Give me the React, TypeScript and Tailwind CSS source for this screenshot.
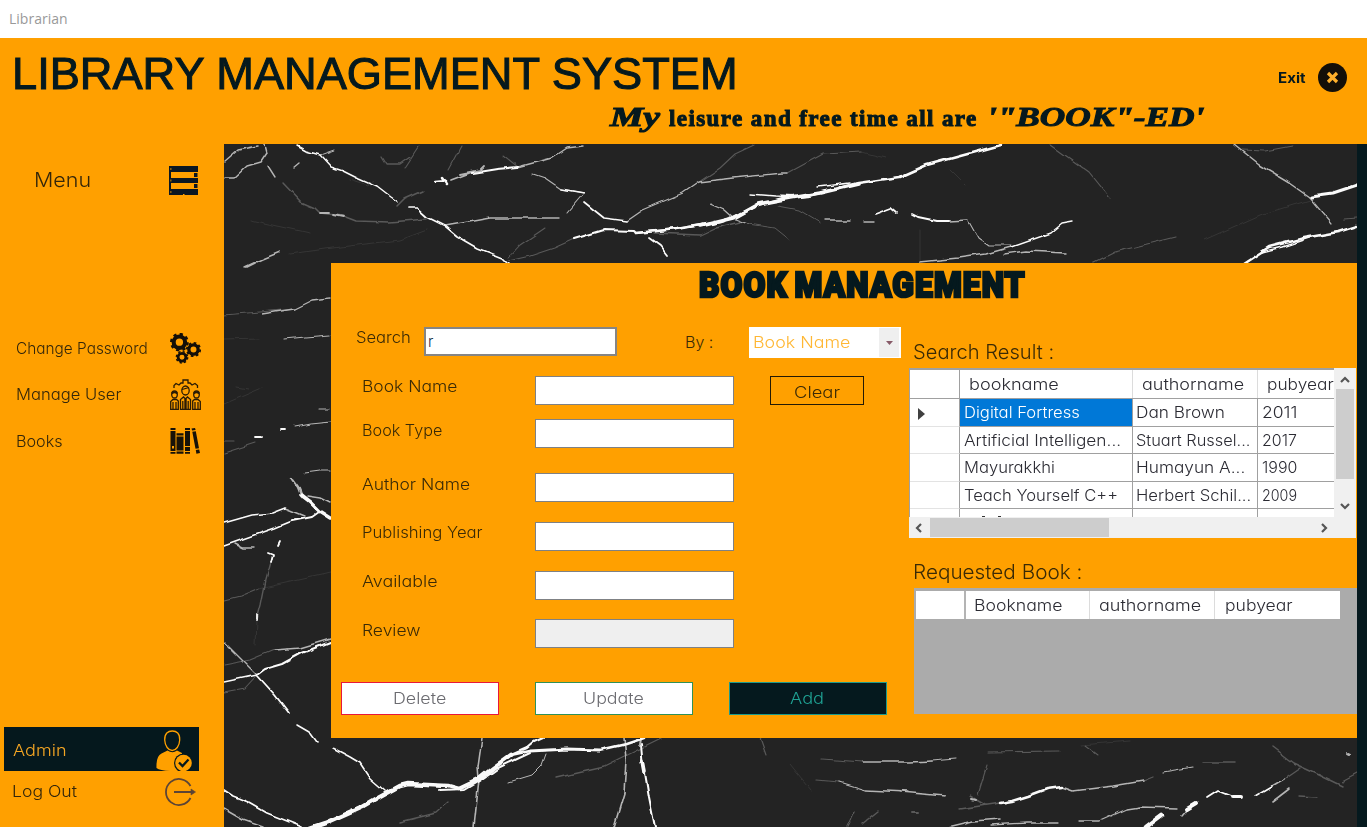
import { useLayoutEffect, useRef, useState } from "react";
import type { ReactNode } from "react";

/** One line of text stretched horizontally so that it spans `w` pixels. */
function Fit({ w, className = "", children }: { w: number; className?: string; children: string }) {
  const ref = useRef<HTMLSpanElement>(null);
  const [scale, setScale] = useState(1);
  useLayoutEffect(() => {
    if (ref.current) setScale(w / ref.current.offsetWidth);
  }, [w, children]);
  return (
    <span className={`inline-block shrink-0 whitespace-pre text-left ${className}`} style={{ width: `${w}px` }}>
      <span ref={ref} className="inline-block origin-left" style={{ transform: `scaleX(${scale})` }}>
        {children}
      </span>
    </span>
  );
}

const brightVeins: [string, number][] = [
  ["M574 239L604 230L634 231L636 233L676 229L720 222", 2.2],
  ["M636 233L676 229L720 222L733 217L758 205L782 198L808 196L858 183L900 177L927 165L1001 145", 2.6],
  ["M700 226L733 218L758 204L790 198L820 193L858 184", 3.6],
  ["M750 194L775 196L800 197M818 187L850 183", 1.4],
  ["M408 208L417 208L427 217L445 226L458 237L477 248L502 258L508 264", 1.7],
  ["M297 146L306 151L320 155L331 167L343 171L359 179L377 187L390 197L397 202", 1.5],
  ["M472 173L497 169L518 167", 2.2],
  ["M436 182L446 181M443 178L447 184", 2.6],
  ["M584 202L604 218L627 221", 1.7],
  ["M561 189L584 193", 1.7],
  ["M649 238L660 246L667 255", 1.8],
  ["M875 214L891 208L897 213M912 214L918 217L937 221L950 221", 1.8],
  ["M1311 197L1333 194L1357 186", 3.2],
  ["M1243 264L1269 247L1304 238L1338 232L1357 226", 2.4],
  ["M1262 252L1282 247L1312 237", 1.4],
  ["M1011 247L1051 233L1062 224L1073 222", 1.4],
  ["M224 523L252 515L272 513L285 508", 1.6],
  ["M224 546L255 535L275 528L292 521L312 517L319 512", 1.8],
  ["M301 495L310 502L319 511L330 518", 3.4],
  ["M257 675L265 669L282 664L302 653L330 642", 2],
  ["M224 682L257 675", 1.5],
  ["M257 675L275 695L289 713", 1.8],
  ["M297 725L309 732L317 743", 1.6],
  ["M278 546L280 542M268 553L273 555L271 563M257 620L257 615", 1.8],
  ["M255 437L262 437M281 429L285 429", 1.8],
  ["M224 790L233 796L248 802L267 813L302 827", 1.8],
  ["M333 748L350 757L360 763L370 778L385 791", 1.6],
  ["M310 829L325 824L363 807L380 797L400 786L408 784L448 786L459 789L478 780L493 768L511 755", 4.6],
  ["M440 791L465 790L480 781L500 767L530 753", 2],
  ["M511 755L530 751L567 749L600 750L626 744L644 738", 2.8],
  ["M511 755L527 748L534 742L543 738", 2.2],
  ["M642 744L644 767L649 797L655 827", 2],
  ["M643 760L645 771", 3.6],
  ["M1000 803L1012 801L1028 796L1047 789L1062 787", 2.4],
  ["M1146 828L1162 816", 4.6],
  ["M1187 809L1197 803M1232 796L1241 796", 4],
  ["M1207 797L1218 790L1233 796", 1.8],
  ["M1255 796L1272 786", 1.6],
];

const softVeins: [string, number][] = [
  ["M445 226L468 222L490 218L559 218", 1.4],
  ["M567 213L584 193L561 189L545 178L533 174", 1.1],
  ["M627 221L643 210L683 193L699 182L733 178L782 173L788 173", 1.3],
  ["M518 167L552 158L567 148L583 146", 1.4],
  ["M451 180L472 172M460 174L480 170L484 166", 1.8],
  ["M224 162L238 150L258 146", 1.5],
  ["M224 178L234 178L247 166L261 162L267 153L265 145", 1.5],
  ["M268 166L275 177M293 168L299 163M245 267L262 259L279 252", 1.4],
  ["M320 213L329 213M333 215L343 217", 1.8],
  ["M320 155L334 150", 1],
  ["M825 220L850 220M865 222L874 222M950 221L968 220", 1.4],
  ["M969 222L978 238L988 245L1011 245", 1.1],
  ["M920 262L959 258L986 254L1011 247", 1.5],
  ["M1004 254L1026 251L1066 253", 1.4],
  ["M1234 145L1259 165L1289 183L1309 197", 1.5],
  ["M1309 197L1320 210L1331 223", 1.2],
  ["M711 204L725 210L735 219L748 224", 1.3],
  ["M247 267L255 263", 1.8],
  ["M262 314L294 309L312 300L330 298", 1.3],
  ["M285 339L305 337L330 335", 1.2],
  ["M294 426L310 423L330 421M319 410L330 410M305 473L320 471L330 471", 1.1],
  ["M292 479L298 487L302 497", 2.6],
  ["M307 496L320 498L330 503M285 508L305 516", 1.4],
  ["M235 544L243 548L255 548", 1.4],
  ["M225 643L240 658L257 675", 1.4],
  ["M274 650L300 648L330 639", 1.5],
  ["M224 809L243 820L263 827", 1.5],
  ["M482 738L478 767L479 780L474 827", 1.6],
  ["M624 738L626 760L624 793L614 827", 1.6],
  ["M509 782L532 775L541 766L545 755", 1],
  ["M863 762L910 762L932 761M840 782L866 790L907 792M900 792L945 796", 1.3],
  ["M932 761L957 759", 1],
  ["M1062 787L1073 791L1113 786L1143 781", 1.7],
  ["M1163 772L1193 767", 1.2],
  ["M948 827L973 821L1000 819", 1.6],
  ["M990 825L1027 823L1057 823M1080 821L1100 821L1127 809L1140 807L1177 808", 1.3],
  ["M1182 816L1188 809M1273 802L1290 789M1272 786L1284 779", 1.6],
  ["M972 799L976 800M1348 753L1350 754", 2],
  ["M641 738L640 745", 2],
];

const faintVeins: [string, number][] = [
  ["M283 183L301 202L315 208L320 213L343 216L356 221L390 222L427 219", 1.5],
  ["M397 207L405 199L423 191", 1.6],
  ["M699 182L720 168L735 154L754 145M788 173L823 154L862 152", 1.1],
  ["M508 261L530 256L554 248L574 239M508 258L520 245L545 228", 1.1],
  ["M405 167L418 147M448 170L461 146M503 155L518 167", 1.1],
  ["M381 156L386 164L400 164L410 157", 1.4],
  ["M1051 145L1090 173L1110 198M1093 263L1115 252L1175 237", 1.2],
  ["M748 224L775 228L790 240M778 206L800 210L820 222", 1],
  ["M654 233L700 235L715 228L740 222", 1.3],
  ["M1242 150L1265 151L1292 146M1357 218L1345 219", 1.1],
  ["M224 315L259 312L294 309M224 453L255 443M224 441L234 441", 1.1],
  ["M224 600L240 596L259 588", 1.1],
  ["M273 555L266 580L261 605L257 620", 1.4],
  ["M224 665L250 660L274 650M224 692L245 688L257 675", 1.1],
  ["M556 778L604 767L661 739", 1.3],
  ["M448 802L436 813L400 822", 1.3],
  ["M822 759L863 762M816 780L840 782M760 738L766 755", 1.2],
  ["M848 827L855 812M863 823L877 812M970 796L985 805", 1.5],
  ["M911 812L918 812", 2],
  ["M987 752L1060 751M987 765L978 795M1085 745L1097 754", 1.1],
  ["M1202 762L1235 762M1272 747L1293 763L1317 774L1342 786", 1.5],
  ["M1284 779L1300 768M1342 782L1357 774M1300 796L1317 797", 1.3],
  ["M960 809L1000 803M1153 777L1143 781", 1.3],
];

const ghostVeins =
  "M290 254L340 247L400 240L427 230M250 220L310 233M350 180L368 186L375 180M1204 240L1260 215L1310 200M950 170L965 185M920 230L920 262M224 340L260 339M236 387L248 389M224 404L262 388M259 588L330 572M257 620L256 645M790 765L810 790M1080 745L1130 741M862 152L885 158";

function Marble() {
  return (
    <svg className="absolute inset-0" width="1133" height="683" viewBox="224 144 1133 683" fill="none" strokeLinejoin="round" strokeLinecap="round">
      <defs>
        <filter id="rough" x="0" y="0" width="100%" height="100%" colorInterpolationFilters="sRGB">
          <feTurbulence type="fractalNoise" baseFrequency="0.06" numOctaves="2" seed="4" result="n" />
          <feDisplacementMap in="SourceGraphic" in2="n" scale="5" xChannelSelector="R" yChannelSelector="G" />
          <feGaussianBlur stdDeviation="0.5" />
        </filter>
      </defs>
      <rect x="224" y="144" width="1133" height="683" fill="#232323" />
      <g filter="url(#rough)">
        <rect x="224" y="144" width="1133" height="683" fill="#232323" />
        <path d={ghostVeins} stroke="#353535" />
        <g stroke="#595959">{faintVeins.map(([d, w]) => <path key={d} d={d} strokeWidth={w} />)}</g>
        <g stroke="#b4b4b4">{softVeins.map(([d, w]) => <path key={d} d={d} strokeWidth={w} />)}</g>
        <g stroke="#fafafa">{brightVeins.map(([d, w]) => <path key={d} d={d} strokeWidth={w} />)}</g>
      </g>
    </svg>
  );
}

function Gear({ x, y, r }: { x: number; y: number; r: number }) {
  const tooth = (2 * Math.PI * r * 0.88) / 16;
  return (
    <g transform={`translate(${x} ${y})`} fill="none" stroke="#140f08">
      <circle r={r * 0.61} strokeWidth={r * 0.44} />
      <circle r={r * 0.88} strokeWidth={r * 0.24} strokeDasharray={`${tooth} ${tooth}`} />
    </g>
  );
}

const GearsIcon = () => (
  <svg width="31" height="31" viewBox="0 0 31 31">
    <Gear x={9.4} y={9.2} r={9.4} />
    <Gear x={23.5} y={16.5} r={7.6} />
    <Gear x={12} y={24.3} r={6.4} />
  </svg>
);

const TeamIcon = () => (
  <svg width="31" height="31" viewBox="0 0 31 31" fill="none" stroke="#2a1b05" strokeWidth="1.3">
    <path d="M4 9V6.500L6 4.500L9 6L11 4H13V1H18V4H20L22 6L25 4.500L27.500 6.500V9" />
    <ellipse cx="15.500" cy="11.500" rx="3.700" ry="4.500" />
    <path d="M12 10.500L19 8.500" />
    <ellipse cx="4.500" cy="15.500" rx="2.800" ry="3.500" />
    <ellipse cx="26.500" cy="15.500" rx="2.800" ry="3.500" />
    <path d="M1.800 14.500Q4.500 12 7.200 14.500M23.800 14.500Q26.500 12 29.200 14.500" strokeWidth="2" />
    <path d="M.7 30.300V22.500L3 20.500H6.500L8.300 22V30.300ZM3 23V30M6 23V30M22.700 30.300V22L24.500 20.500H28L30.300 22.500V30.300ZM25 23V30M28 23V30" />
    <path d="M10.500 30.300V20.500L13.500 18L15.500 20L17.500 18L20.500 20.500V30.300ZM12.800 22V30M18.200 22V30" />
    <path d="M15.500 20V30" strokeWidth="2.400" />
  </svg>
);

const BooksIcon = () => (
  <svg width="30" height="26" viewBox="0 0 30 26" fill="#171208">
    <path d="M.5 0h5v2h-5zM.5 3h5v20h-5zM.5 24h5v1.700h-5zM6.500 5.300h7V7.500h-7zM6.500 8.500h7v14h-7zM6.500 23.500h7v2.200h-7zM15 0h5v2h-5zM15 3h5v15h-5zM15 19h5v4h-5zM15 24h5v1.700h-5zM21.500.5L25 0l.6 2-3.500.6zM22.300 3.800l3.500-.6 3.200 17-3.500.6zM25.800 22l3.400-.6.8 3.600-3.600.7z" />
    <rect x="2" y="18" width="2" height="2.500" fill="#ffa000" />
  </svg>
);

const MenuIcon = () => (
  <svg width="29" height="29" viewBox="0 0 29 29" fill="#0b1722">
    <path d="M0 0h29v6H0zM0 12h29v5H0zM0 23h29v6H0zM0 6h2v17H0zM25 7h3.500v4H25zM25 18h3.500v4H25z" />
    <path d="M1.500 2h.8v2h-.8zM1.500 13.500h.8v2h-.8zM1.500 25h.8v2h-.8zM14 28h1.500v1H14z" fill="#ffa000" />
  </svg>
);

const AdminIcon = () => (
  <svg width="38" height="41" viewBox="0 0 38 41">
    <path d="M.5 38Q0 26 5.500 23.500L11.500 20.500Q16.500 24 21 20.500L26 23L27 41H14Q4 40.500 .5 38Z" fill="#ffa000" />
    <path d="M8.700 10C8.500 3.500 12 1 16.300 1S24 3.500 23.700 10C23.500 16 20 20.500 16.200 20.500S9 16 8.700 10Z" fill="#05181d" stroke="#ffa000" strokeWidth="1.300" />
    <circle cx="27.500" cy="33" r="9.500" fill="#05181d" />
    <circle cx="27.500" cy="33" r="8.300" fill="#ffa000" />
    <path d="M23 32.500L26.500 36L32.500 29.500" fill="none" stroke="#05181d" strokeWidth="2.300" />
  </svg>
);

const LogoutIcon = () => (
  <svg width="31" height="28" viewBox="0 0 31 28" fill="none" stroke="#5b4436" strokeWidth="1.800">
    <path d="M25.500 8A13 13 0 1 0 25.500 20M9 14H29" />
    <path d="M26 11L30.500 14L26 17Z" fill="#5b4436" strokeWidth=".6" />
  </svg>
);

function SideItem({ label, w, icon, className }: { label: string; w: number; icon: ReactNode; className: string }) {
  return (
    <div className={`flex items-center pl-[16px] ${className}`}>
      <div className="w-[154px]">
        <Fit w={w} className="text-[15.500px]">{label}</Fit>
      </div>
      {icon}
    </div>
  );
}

const fields = [
  { label: "Book Name", w: 95, gap: "mb-[14px]", box: "bg-white", line: "leading-[21px]" },
  { label: "Book Type", w: 80, gap: "mb-[25px]", box: "bg-white", line: "leading-[23px]" },
  { label: "Author Name", w: 108, gap: "mb-[20px]", box: "bg-white", line: "leading-[23px]" },
  { label: "Publishing Year", w: 121, gap: "mb-[20px]", box: "bg-white", line: "leading-[21px]" },
  { label: "Available", w: 76, gap: "mb-[19px]", box: "bg-white", line: "leading-[21px]" },
  { label: "Review", w: 59, gap: "mb-[34px]", box: "bg-[#efefef]", line: "leading-[23px]" },
];

const books: [string, number, string, number, string][] = [
  ["Digital Fortress", 116, "Dan Brown", 89, "2011"],
  ["Artificial Intelligen...", 157, "Stuart Russel...", 114, "2017"],
  ["Mayurakkhi", 91, "Humayun A...", 109, "1990"],
  ["Teach Yourself C++", 154, "Herbert Schil...", 115, "2009"],
];

const Chevron = ({ className }: { className: string }) => (
  <svg className={className} width="10" height="10" viewBox="0 0 10 10" fill="none" stroke="#555" strokeWidth="2.200">
    <path d="M1 7L5 3L9 7" />
  </svg>
);

function ResultGrid() {
  return (
    <div className="flex h-[170px] w-[447px] flex-col bg-[#f0f0f0] text-[15.500px] text-[#2b2b33]">
      <div className="flex h-[149px]">
        <div className="w-[425px] overflow-hidden border-l border-t-2 border-[#a0a0a0] bg-white">
          <div className="flex h-[29px] items-stretch border-b border-[#a0a0a0] leading-[29px]">
            <div className="w-[50px] shrink-0 border-r border-[#a0a0a0]" />
            <div className="w-[173px] shrink-0 border-r border-[#dcdcdc] pl-[9px]"><Fit w={90}>bookname</Fit></div>
            <div className="w-[125px] shrink-0 border-r border-[#dcdcdc] pl-[9px]"><Fit w={102}>authorname</Fit></div>
            <div className="pl-[9px]"><Fit w={67}>pubyear</Fit></div>
          </div>
          {books.map(([name, nw, author, aw, year], i) => (
            <div key={name} className={`flex leading-[27px] ${i % 2 ? "h-[27px]" : "h-[28px]"}`}>
              <div className="flex w-[50px] shrink-0 items-center border-b border-r border-b-[#e3e3e3] border-r-[#a0a0a0] pl-[8px] pt-[2px]">
                {i === 0 && (
                  <svg width="7" height="12" viewBox="0 0 7 12"><path d="M0 0L7 6L0 12Z" fill="#404040" /></svg>
                )}
              </div>
              <div className={`w-[173px] shrink-0 border-b border-r border-[#a0a0a0] pl-[4px] ${i === 0 ? "bg-[#0078d7] text-white" : ""}`}><Fit w={nw}>{name}</Fit></div>
              <div className="w-[125px] shrink-0 border-b border-r border-[#a0a0a0] pl-[3px]"><Fit w={aw}>{author}</Fit></div>
              <div className="grow border-b border-[#a0a0a0] pl-[4px]"><Fit w={35}>{year}</Fit></div>
            </div>
          ))}
          <div className="flex h-[9px]">
            <div className="w-[50px] border-r border-[#a0a0a0]" />
            <div className="flex w-[173px] items-end gap-[13px] border-r border-[#a0a0a0] pl-[22px]">
              <div className="mb-px h-px w-[3px] bg-[#333]" />
              <div className="mb-px h-px w-[3px] bg-[#333]" />
            </div>
            <div className="w-[125px] border-r border-[#a0a0a0]" />
          </div>
        </div>
        <div className="flex w-[22px] flex-col items-center pt-[7px]">
          <Chevron className="" />
          <div className="mt-[4px] h-[90px] w-[18px] bg-[#cdcdcd]" />
          <Chevron className="mt-[22px] rotate-180" />
        </div>
      </div>
      <div className="flex h-[21px] items-center pl-[5px]">
        <Chevron className="-rotate-90" />
        <div className="ml-[6px] h-[19px] w-[179px] bg-[#cdcdcd]" />
        <Chevron className="ml-[210px] rotate-90" />
      </div>
    </div>
  );
}

function RequestedGrid() {
  return (
    <div className="ml-[5px] h-[126px] w-[443px] bg-[#ababab] pl-[2px] pt-[3px] text-[15.500px] leading-[29px] text-[#2b2b33]">
      <div className="flex h-[28px] w-[424px] bg-white">
        <div className="w-[50px] border-r-2 border-[#b4b4b4]" />
        <div className="w-[124px] border-r border-[#dcdcdc] pl-[8px]"><Fit w={89}>Bookname</Fit></div>
        <div className="w-[125px] border-r border-[#dcdcdc] pl-[9px]"><Fit w={102}>authorname</Fit></div>
        <div className="pl-[10px]"><Fit w={68}>pubyear</Fit></div>
      </div>
    </div>
  );
}

function BookPanel() {
  return (
    <section className="relative ml-[107px] mt-[119px] flex h-[475px] w-[1026px] flex-col bg-[#ffa000]">
      <h2 className="h-[46px] pl-[368px] font-['Roboto',sans-serif] text-[35px] font-black leading-[46px] tracking-[0.035em] text-[#05191e] [-webkit-text-stroke:2.600px_#05191e] [word-spacing:-0.08em]">
        <Fit w={327}>BOOK MANAGEMENT</Fit>
      </h2>
      <div className="flex">
        <div className="w-[578px] pt-[18px] text-base text-[#3a2a06]">
          <div className="mb-[18px] flex h-[31px] pl-[25px] leading-[21px]">
            <div className="w-[68px]"><Fit w={55}>Search</Fit></div>
            <div className="h-[29px] w-[193px] border-2 border-[#858585] bg-white pl-[2px] text-[15px] leading-[26px] text-[#16304a]">r</div>
            <div className="ml-[68px] w-[64px] leading-[30px]"><Fit w={28}>By :</Fit></div>
            <div className="flex w-[152px] items-center justify-between bg-white pl-[4px] pr-[2px] text-[#ffb733]">
              <Fit w={97}>Book Name</Fit>
              <div className="flex h-[29px] w-[20px] items-center justify-center bg-[#efefef]">
                <svg width="7" height="4" viewBox="0 0 7 4"><path d="M0 0H7L3.500 4Z" fill="#875a68" /></svg>
              </div>
            </div>
          </div>
          {fields.map((f, i) => (
            <div key={f.label} className={`flex h-[29px] pl-[31px] ${f.gap}`}>
              <div className={`w-[173px] ${f.line}`}><Fit w={f.w}>{f.label}</Fit></div>
              <div className={`w-[199px] border border-[#7f8184] ${f.box}`} />
              {i === 0 && (
                <button className="ml-[36px] w-[94px] border border-[#231a05] pt-[2px] text-center leading-[27px]">
                  <Fit w={46}>Clear</Fit>
                </button>
              )}
            </div>
          ))}
          <div className="flex gap-[36px] pl-[10px] text-[15.500px]">
            <button className="h-[33px] w-[158px] border border-[#e8173a] bg-white pr-[2px] text-[#6b6b70]"><Fit w={53}>Delete</Fit></button>
            <button className="h-[33px] w-[158px] border border-[#2f9158] bg-white pr-[2px] text-[#6b6b70]"><Fit w={61}>Update</Fit></button>
            <button className="h-[33px] w-[158px] border border-[#1c9a8c] bg-[#05191e] pr-[3px] text-[#1fa193]"><Fit w={34}>Add</Fit></button>
          </div>
        </div>
        <div className="pt-[27px] text-xl text-[#3a2a06]">
          <div className="h-[32px] pl-[4px] leading-[32px]"><Fit w={141}>Search Result :</Fit></div>
          <ResultGrid />
          <div className="mt-[18px] h-[32px] pl-[4px] leading-[32px]"><Fit w={169}>Requested Book :</Fit></div>
          <RequestedGrid />
        </div>
      </div>
    </section>
  );
}

export default function App() {
  return (
    <div className="flex h-[827px] w-[1367px] flex-col overflow-hidden bg-[#ffa000] font-['Inter',sans-serif] font-light [font-feature-settings:'cv11','ss03']">
      <div className="h-[38px] bg-white pl-[9px] font-['Open_Sans',sans-serif] text-[14px] font-normal leading-[38px] text-[#999]">
        <Fit w={59}>Librarian</Fit>
      </div>
      <header className="flex h-[106px] justify-between text-[#05191e]">
        <div>
          <h1 className="h-[62px] pl-[12px] pt-[9px] font-['Liberation_Sans',sans-serif] text-[43.500px] font-normal leading-[55px] [-webkit-text-stroke:1px_#05191e]">
            <Fit w={726}>LIBRARY MANAGEMENT SYSTEM</Fit>
          </h1>
          <p className="flex items-baseline pl-[610px] font-['Liberation_Serif',serif] text-[23px] font-bold leading-[34px] [-webkit-text-stroke:1px_#05191e]">
            <Fit w={50} className="text-[27px] italic">My</Fit>
            <Fit w={309} className="ml-[9px] tracking-[0.06em]">leisure and free time all are</Fit>
            <Fit w={218} className="ml-[9px] text-[27px] italic">{"'\"BOOK\"-ED'"}</Fit>
          </p>
        </div>
        <div className="flex h-[79px] items-center gap-[12px] pr-[20px]">
          <Fit w={28} className="text-[14px] font-bold">Exit</Fit>
          <svg width="29" height="29" viewBox="0 0 29 29">
            <circle cx="14.500" cy="14.500" r="14.500" fill="#140f08" />
            <path d="M10 10L19 19M19 10L10 19" stroke="#ffb02c" strokeWidth="3.200" />
          </svg>
        </div>
      </header>
      <div className="flex h-[683px]">
        <nav className="flex w-[224px] flex-col text-[#33260a]">
          <div className="flex h-[73px] items-center pl-[34px]">
            <div className="w-[135px] pb-[2px]"><Fit w={57} className="text-xl">Menu</Fit></div>
            <MenuIcon />
          </div>
          <SideItem label="Change Password" w={132} icon={<GearsIcon />} className="mt-[108px] h-[46px]" />
          <SideItem label="Manage User" w={105} icon={<TeamIcon />} className="h-[46px]" />
          <SideItem label="Books" w={47} icon={<BooksIcon />} className="h-[48px]" />
          <div className="ml-[4px] mt-[262px] flex h-[44px] w-[195px] items-center bg-[#05181d] pl-[9px] pt-[2px] text-[#f5a623]">
            <div className="w-[143px]"><Fit w={53} className="text-[16px]">Admin</Fit></div>
            <AdminIcon />
          </div>
          <div className="flex h-[41px] items-center pl-[12px]">
            <div className="w-[153px] pb-[2px]"><Fit w={65} className="text-[16px]">Log Out</Fit></div>
            <LogoutIcon />
          </div>
        </nav>
        <main className="relative flex w-[1133px] items-start overflow-hidden bg-[#232323]">
          <Marble />
          <BookPanel />
        </main>
        <div className="w-[10px] bg-[#05191e]" />
      </div>
    </div>
  );
}
